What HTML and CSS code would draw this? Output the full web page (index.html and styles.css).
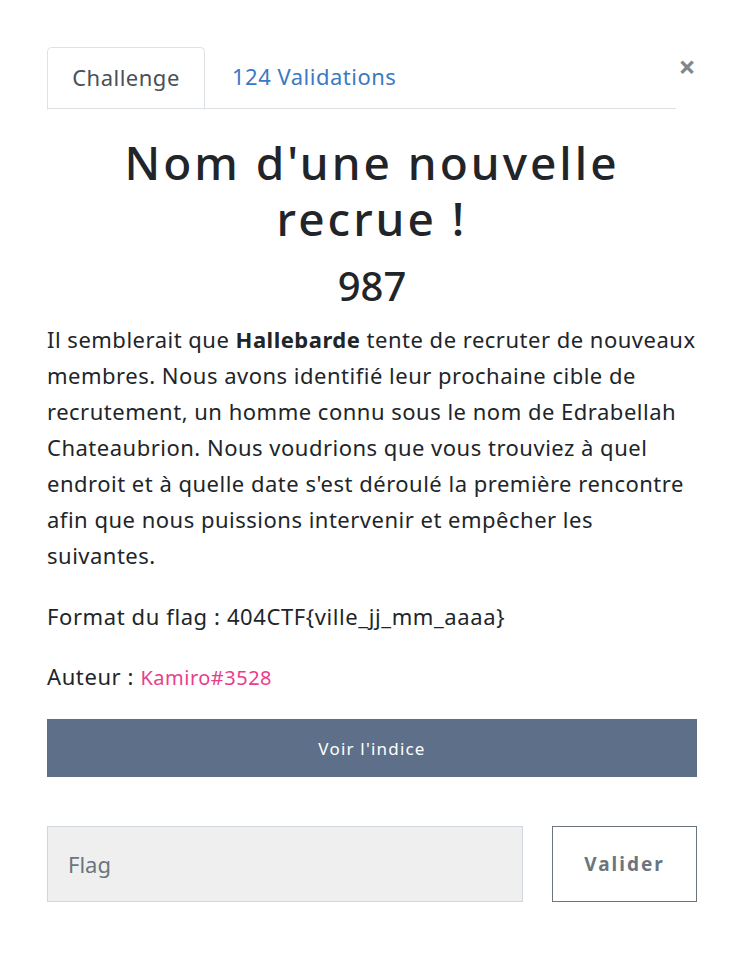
FILE: index.html
```html
<!DOCTYPE html>
<html lang="fr">
<head>
<meta charset="utf-8">
<title>Challenge</title>
<link rel="stylesheet" href="styles.css">
</head>
<body>
<div class="modal">
  <div class="tabs-row">
    <ul class="tabs">
      <li class="tab active">Challenge</li>
      <li class="tab link">124 Validations</li>
    </ul>
    <span class="close">&times;</span>
  </div>
  <h1 class="title">Nom d'une nouvelle recrue !</h1>
  <div class="points">987</div>
  <p class="desc">Il semblerait que <strong>Hallebarde</strong> tente de recruter de nouveaux<br>membres. Nous avons identifié leur prochaine cible de<br>recrutement, un homme connu sous le nom de Edrabellah<br>Chateaubrion. Nous voudrions que vous trouviez à quel<br>endroit et à quelle date s'est déroulé la première rencontre<br>afin que nous puissions intervenir et empêcher les<br>suivantes.</p>
  <p class="line format">Format du flag : 404CTF{ville_jj_mm_aaaa}</p>
  <p class="line">Auteur : <span class="author">Kamiro#3528</span></p>
  <button class="hint">Voir l'indice</button>
  <div class="submit-row">
    <div class="flag-input">Flag</div>
    <button class="validate">Valider</button>
  </div>
</div>
</body>
</html>
```

FILE: styles.css
```css
html, body {
  margin: 0;
  padding: 0;
  background: #ffffff;
}
body {
  font-family: "Noto Sans", "Open Sans", sans-serif;
  color: #212529;
}
.modal {
  padding: 47px 47px 0 47px;
  display: flex;
  flex-direction: column;
}
.tabs-row {
  display: flex;
  align-items: flex-start;
}
.tabs {
  list-style: none;
  margin: 0;
  padding: 0;
  display: flex;
  width: 631px;
  border-bottom: 1px solid #dee2e6;
  height: 62px;
  box-sizing: border-box;
}
.tab {
  font-size: 22px;
  letter-spacing: 0.5px;
  height: 62px;
  box-sizing: border-box;
  display: flex;
  align-items: center;
  padding: 0 25px 4px 26px;
  white-space: nowrap;
}
.tab.active {
  border: 1px solid #dee2e6;
  border-bottom-color: #ffffff;
  border-radius: 5px 5px 0 0;
  color: #495057;
  height: 63px;
  width: 158px;
  justify-content: center;
  padding: 0 0 4px 0;
}
.tab.link {
  color: #3b79c3;
  padding-left: 27px;
}
.close {
  margin-left: 1px;
  margin-top: 5px;
  font-size: 30px;
  font-weight: 700;
  color: #858585;
  line-height: 30px;
  width: 20px;
  text-align: center;
}
.title {
  margin: 25px 0 0 0;
  font-size: 46px;
  font-weight: 500;
  letter-spacing: 3px;
  line-height: 56px;
  text-align: center;
  padding: 0 60px;
}
.points {
  text-align: center;
  font-size: 40px;
  font-weight: 500;
  line-height: 50px;
  margin-top: 15px;
}
.desc {
  margin: 10px 0 0 0;
  font-size: 22px;
  line-height: 36px;
  letter-spacing: 0.5px;
  white-space: nowrap;
}
.desc strong {
  font-weight: 700;
}
.line {
  margin: 24px 0 0 0;
  font-size: 22px;
  line-height: 36px;
  letter-spacing: 0.6px;
}
.format {
  margin-top: 25px;
}
.author {
  color: #e83e8c;
  font-size: 20px;
  letter-spacing: 0.5px;
}
.hint {
  margin-top: 23px;
  height: 58px;
  width: 100%;
  border: none;
  background: #5e7089;
  color: #ffffff;
  font-family: inherit;
  font-size: 17px;
  letter-spacing: 1.2px;
}
.submit-row {
  margin-top: 49px;
  display: flex;
  gap: 29px;
}
.flag-input {
  flex: 0 0 476px;
  height: 76px;
  box-sizing: border-box;
  background: #efefef;
  border: 1px solid #d0d6de;
  display: flex;
  align-items: center;
  padding-left: 20px;
  font-size: 22px;
  color: #6c757d;
}
.validate {
  flex: 1;
  height: 76px;
  background: #ffffff;
  border: 1px solid #6c757d;
  color: #6c757d;
  font-family: inherit;
  font-size: 19px;
  font-weight: 700;
  letter-spacing: 2px;
}
```
